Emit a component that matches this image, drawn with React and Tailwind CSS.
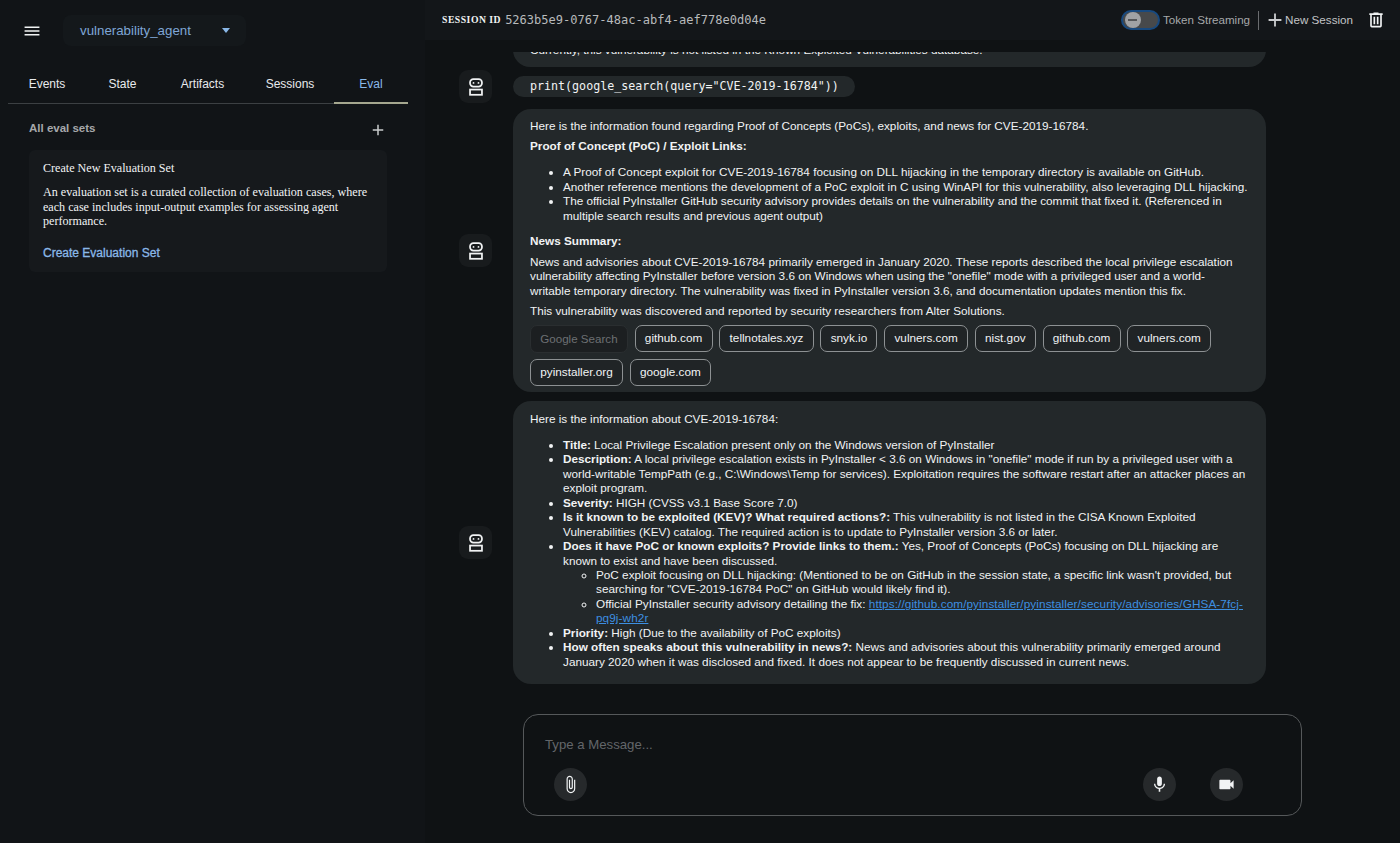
function Icon({ d, className }) {
  return (
    <svg viewBox="0 0 24 24" fill="currentColor" className={className}>
      <path d={d} />
    </svg>
  );
}
const P = {
  menu: "M3 18h18v-2H3v2zm0-5h18v-2H3v2zm0-7v2h18V6H3z",
  add: "M19 13h-6v6h-2v-6H5v-2h6V5h2v6h6v2z",
  del: "M9 3v1H4v2h1v13a2 2 0 0 0 2 2h10a2 2 0 0 0 2-2V6h1V4h-5V3H9zM7 6h10v13H7V6zm2 2v9h2V8H9zm4 0v9h2V8h-2z",
  mic: "M12 14c1.66 0 3-1.34 3-3V5c0-1.66-1.34-3-3-3S9 3.34 9 5v6c0 1.66 1.34 3 3 3zm5.3-3c0 3-2.54 5.1-5.3 5.1S6.7 14 6.7 11H5c0 3.41 2.72 6.23 6 6.72V21h2v-3.28c3.28-.48 6-3.3 6-6.72h-1.7z",
  cam: "M17 10.5V7c0-.55-.45-1-1-1H4c-.55 0-1 .45-1 1v10c0 .55.45 1 1 1h12c.55 0 1-.45 1-1v-3.5l4 4v-11l-4 4z",
  clip: "M16.5 6v11.5c0 2.21-1.79 4-4 4s-4-1.79-4-4V5c0-1.38 1.12-2.5 2.5-2.5s2.5 1.12 2.5 2.5v10.5c0 .55-.45 1-1 1s-1-.45-1-1V6H10v9.5c0 1.38 1.12 2.5 2.5 2.5s2.5-1.12 2.5-2.5V5c0-2.21-1.79-4-4-4S7 2.79 7 5v12.5c0 3.04 2.46 5.5 5.5 5.5s5.5-2.46 5.5-5.5V6h-1.5z",
};

function Robot() {
  return (
    <div className="w-[33px] h-[33px] shrink-0 rounded-[9px] bg-[#181b1d] flex items-center justify-center text-[#f1f3f4]">
      <svg viewBox="0 0 24 24" width="22" height="22" fill="none" stroke="currentColor" strokeWidth="1.9">
        <rect x="5.5" y="3.5" width="13" height="8" rx="3.6" />
        <rect x="5.5" y="14.8" width="13" height="5.7" />
        <circle cx="9.3" cy="7.5" r="1" fill="currentColor" stroke="none" />
        <circle cx="14.7" cy="7.5" r="1" fill="currentColor" stroke="none" />
      </svg>
    </div>
  );
}

function Row({ children, robot = true, className = "" }) {
  return (
    <div className={`flex items-center gap-[21px] pl-[34px] ${className}`}>
      {robot ? <Robot /> : <div className="w-[33px] shrink-0" />}
      {children}
    </div>
  );
}

function Chip({ children, muted }) {
  return muted ? (
    <span className="h-[28px] px-[9.25px] flex items-center text-[11.6px] rounded-[7px] bg-[#1c1f21] text-[#6d7073] border border-[#2a2e30]">{children}</span>
  ) : (
    <span className="h-[27px] first:h-[28px] px-[9.25px] flex items-center text-[11.75px] rounded-[7px] bg-[#202426] text-[#f1f3f4] border border-[#8d9193]">{children}</span>
  );
}

function Bubble({ children, className = "" }) {
  return <div className={`w-[753px] shrink-0 bg-[#23282a] rounded-[18px] text-[#f1f3f4] ${className}`}>{children}</div>;
}

const tabs = [
  ["Events", "w-[78px]"],
  ["State", "w-[73px]"],
  ["Artifacts", "w-[87px]"],
  ["Sessions", "w-[88px]"],
];

function CircleBtn({ d }) {
  return (
    <div className="w-[33px] h-[33px] rounded-full bg-[#26292b] flex items-center justify-center text-[#f1f3f4]">
      <Icon d={d} className="w-[19px] h-[19px]" />
    </div>
  );
}

export default function App() {
  return (
    <div className="w-[1400px] h-[843px] flex overflow-hidden bg-[#0f1214] font-['Liberation_Sans',Arial,sans-serif]">
      <aside className="w-[425px] shrink-0 bg-[#111417] flex flex-col">
        <div className="h-[62px] flex items-center pl-[23px]">
          <Icon d={P.menu} className="w-[18px] h-[18px] text-[#f1f3f4] scale-x-110" />
          <div className="ml-[22px] mt-[-1px] w-[183px] h-[31px] rounded-[8px] bg-[#14181b] flex items-center pl-[17px] text-[13.3px] text-[#7fa6d6]">
            <span>vulnerability_agent</span>
            <span className="ml-[31px] w-0 h-0 border-x-[4.5px] border-x-transparent border-t-[5px] border-t-[#8ab8e8]" />
          </div>
        </div>
        <div className="mt-[5px] ml-[8px] w-[400px] h-[37px] flex border-b border-[#3c4043] text-[12px] text-[#e8eaed]">
          {tabs.map(([t, w]) => (
            <div key={t} className={`${w} pb-[2px] flex items-center justify-center`}>{t}</div>
          ))}
          <div className="w-[74px] pb-[2px] flex items-center justify-center text-[#8ab8e8] border-b-2 border-[#a5a78f] h-[37px]">Eval</div>
        </div>
        <div className="mt-[14px] ml-[29px] w-[358px] flex items-center justify-between">
          <span className="text-[11.5px] font-bold text-[#a6a8aa]">All eval sets</span>
          <Icon d={P.add} className="w-[18px] h-[18px] text-[#c9cbcd] mt-[3px]" />
        </div>
        <div className="mt-[11px] ml-[29px] w-[358px] h-[122px] rounded-[6px] bg-[#16191c] px-[14px] pt-[11px] text-[#f1f3f4] font-['Liberation_Serif','Times_New_Roman',serif] text-[12.1px] leading-[14.3px]">
          <div>Create New Evaluation Set</div>
          <div className="mt-[10px]">An evaluation set is a curated collection of evaluation cases, where each case includes input-output examples for assessing agent performance.</div>
          <div className="mt-[18px] font-['Liberation_Sans',Arial,sans-serif] [-webkit-text-stroke:0.3px_#8ab8e8] text-[12px] text-[#8ab8e8]">Create Evaluation Set</div>
        </div>
      </aside>
      <main className="flex-1 min-w-0 flex flex-col">
        <header className="h-[40px] shrink-0 bg-[#131619] flex items-center pl-[17px] pr-[14px]">
          <span className="font-['Liberation_Serif',serif] font-bold text-[9.7px] tracking-[0.5px] text-[#f1f3f4] whitespace-nowrap">SESSION ID</span>
          <span className="ml-[4px] font-['DejaVu_Sans_Mono',monospace] text-[12.04px] text-[#b8babc] whitespace-nowrap">5263b5e9-0767-48ac-abf4-aef778e0d04e</span>
          <div className="ml-auto flex items-center">
            <div className="w-[39px] h-[20px] rounded-full bg-[#47494b] border-2 border-[#17497f] flex items-center pl-[1.5px]">
              <span className="w-[16px] h-[16px] rounded-full bg-[#a0a2a5] flex items-center justify-center">
                <span className="w-[9px] h-[1.5px] bg-[#55575a]" />
              </span>
            </div>
            <span className="ml-[3px] text-[11.6px] text-[#a6a8aa]">Token Streaming</span>
            <span className="ml-[8px] w-px h-[19px] bg-[#6a6c6f]" />
            <Icon d={P.add} className="ml-[5px] w-[22px] h-[22px] text-[#c9cbcd]" />
            <span className="ml-[-1px] text-[11.65px] text-[#c2c4c6]">New Session</span>
            <Icon d={P.del} className="ml-[13px] w-[20px] h-[20px] text-[#f1f3f4]" />
          </div>
        </header>
        <section className="mt-[12px] h-[632px] shrink-0 overflow-hidden flex flex-col justify-end gap-[9px] text-[11.75px] leading-[14.45px]">
          <Row robot={false}>
            <Bubble className="px-[17px] pt-[10px] pb-[10px]">
              <p>Currently, this vulnerability is not listed in the Known Exploited Vulnerabilities database.</p>
            </Bubble>
          </Row>
          <Row className="mt-[-6px] mb-[-3px]">
            <div className="w-[342px] h-[21px] rounded-[11px] bg-[#23282a] px-[17px] flex items-center font-['DejaVu_Sans_Mono',monospace] text-[11.66px] text-[#f1f3f4] whitespace-nowrap">print(google_search(query="CVE-2019-16784"))</div>
          </Row>
          <Row>
            <Bubble className="h-[283px] px-[17px] pt-[10px]">
              <p>Here is the information found regarding Proof of Concepts (PoCs), exploits, and news for CVE-2019-16784.</p>
              <p className="mt-[5.5px] font-bold">Proof of Concept (PoC) / Exploit Links:</p>
              <ul className="mt-[12px] pl-[33px] list-disc">
                <li>A Proof of Concept exploit for CVE-2019-16784 focusing on DLL hijacking in the temporary directory is available on GitHub.</li>
                <li>Another reference mentions the development of a PoC exploit in C using WinAPI for this vulnerability, also leveraging DLL hijacking.</li>
                <li>The official PyInstaller GitHub security advisory provides details on the vulnerability and the commit that fixed it. (Referenced in multiple search results and previous agent output)</li>
              </ul>
              <p className="mt-[11px] font-bold">News Summary:</p>
              <p className="mt-[6px] pr-[8px]">News and advisories about CVE-2019-16784 primarily emerged in January 2020. These reports described the local privilege escalation vulnerability affecting PyInstaller before version 3.6 on Windows when using the "onefile" mode with a privileged user and a world-writable temporary directory. The vulnerability was fixed in PyInstaller version 3.6, and documentation updates mention this fix.</p>
              <p className="mt-[5.5px]">This vulnerability was discovered and reported by security researchers from Alter Solutions.</p>
              <div className="mt-[7px] flex flex-wrap gap-x-[6.75px] gap-y-[6px]">
                <Chip muted>Google Search</Chip>
                {["github.com", "tellnotales.xyz", "snyk.io", "vulners.com", "nist.gov", "github.com", "vulners.com", "pyinstaller.org", "google.com"].map((c, i) => (
                  <Chip key={i}>{c}</Chip>
                ))}
              </div>
            </Bubble>
          </Row>
          <Row>
            <Bubble className="h-[283px] px-[17px] pt-[11px]">
              <p>Here is the information about CVE-2019-16784:</p>
              <ul className="mt-[11.5px] pl-[33px] list-disc">
                <li><b>Title:</b> Local Privilege Escalation present only on the Windows version of PyInstaller</li>
                <li><b>Description:</b> A local privilege escalation exists in PyInstaller &lt; 3.6 on Windows in "onefile" mode if run by a privileged user with a world-writable TempPath (e.g., C:\Windows\Temp for services). Exploitation requires the software restart after an attacker places an exploit program.</li>
                <li><b>Severity:</b> HIGH (CVSS v3.1 Base Score 7.0)</li>
                <li><b>Is it known to be exploited (KEV)? What required actions?:</b> This vulnerability is not listed in the CISA Known Exploited Vulnerabilities (KEV) catalog. The required action is to update to PyInstaller version 3.6 or later.</li>
                <li><b>Does it have PoC or known exploits? Provide links to them.:</b> Yes, Proof of Concepts (PoCs) focusing on DLL hijacking are known to exist and have been discussed.
                  <ul className="pl-[33px] list-[circle]">
                    <li>PoC exploit focusing on DLL hijacking: (Mentioned to be on GitHub in the session state, a specific link wasn't provided, but searching for "CVE-2019-16784 PoC" on GitHub would likely find it).</li>
                    <li>Official PyInstaller security advisory detailing the fix: <span className="text-[#3d8fe0] underline tracking-[0.09px]">https://github.com/pyinstaller/pyinstaller/security/advisories/GHSA-7fcj-pq9j-wh2r</span></li>
                  </ul>
                </li>
                <li><b>Priority:</b> High (Due to the availability of PoC exploits)</li>
                <li><b>How often speaks about this vulnerability in news?:</b> News and advisories about this vulnerability primarily emerged around January 2020 when it was disclosed and fixed. It does not appear to be frequently discussed in current news.</li>
              </ul>
            </Bubble>
          </Row>
        </section>
        <div className="mt-[30px] ml-[98px] w-[779px] h-[102px] shrink-0 rounded-[15px] border border-[#55585a] flex flex-col pl-[21px] pr-[58px] pt-[22px]">
          <div className="text-[13.2px] leading-[16px] text-[#63666a]">Type a Message...</div>
          <div className="mt-[15px] ml-[9px] flex items-center">
            <CircleBtn d={P.clip} />
            <div className="ml-auto flex gap-[34px]">
              <CircleBtn d={P.mic} />
              <CircleBtn d={P.cam} />
            </div>
          </div>
        </div>
      </main>
    </div>
  );
}
